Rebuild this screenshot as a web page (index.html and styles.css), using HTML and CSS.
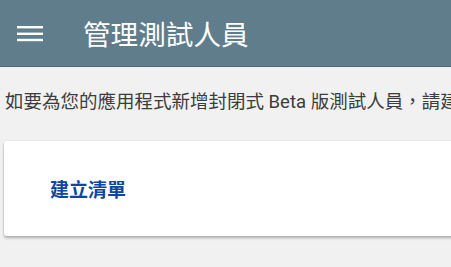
FILE: index.html
```html
<!DOCTYPE html>
<html lang="zh-Hant">
<head>
<meta charset="utf-8">
<link rel="stylesheet" href="styles.css">
</head>
<body>
<header class="topbar">
  <svg class="menu" width="26" height="16" viewBox="0 0 26 16"><rect x="0" y="0" width="26" height="2.4" fill="#fff"/><rect x="0" y="6.6" width="26" height="2.4" fill="#fff"/><rect x="0" y="12.8" width="26" height="2.4" fill="#fff"/></svg>
  <h1 class="title">管理測試人員</h1>
</header>
<main class="content">
  <p class="intro">如要為您的應用程式新增封閉式 Beta 版測試人員，請建立清單並新增測試人員的電子郵件地址。</p>
  <section class="card">
    <a class="create" href="#">建立清單</a>
  </section>
</main>
</body>
</html>
```
FILE: styles.css
```css
html, body { margin: 0; padding: 0; }
body {
  width: 451px;
  height: 267px;
  overflow: hidden;
  background: #f1f1f1;
  font-family: Roboto, "Noto Sans CJK TC", sans-serif;
}
.topbar {
  height: 66px;
  background: #607d8b;
  border-bottom: 1px solid #4f6874;
  display: flex;
  align-items: center;
  padding-left: 17px;
  box-sizing: content-box;
}
.menu { flex: none; margin-top: 1px; }
.title {
  margin: 0 0 0 40px;
  color: #fff;
  font-size: 27.6px;
  font-weight: 400;
  white-space: nowrap;
}
.content { padding: 0 0 0 4px; }
.intro {
  margin: 23px 0 0 1px;
  font-size: 18.5px;
  line-height: 25px;
  color: #3c3c3c;
  white-space: nowrap;
  overflow: hidden;
}
.card {
  margin-top: 26px;
  width: 480px;
  height: 95px;
  background: #fff;
  border-radius: 3px;
  box-shadow: 0 2px 3px rgba(0,0,0,0.28), 0 0 2px rgba(0,0,0,0.08);
  display: flex;
  align-items: center;
  padding-left: 46px;
}
.create {
  color: #0d47a1;
  font-size: 19px;
  font-weight: 700;
  text-decoration: none;
  margin-top: -1px;
}
```
